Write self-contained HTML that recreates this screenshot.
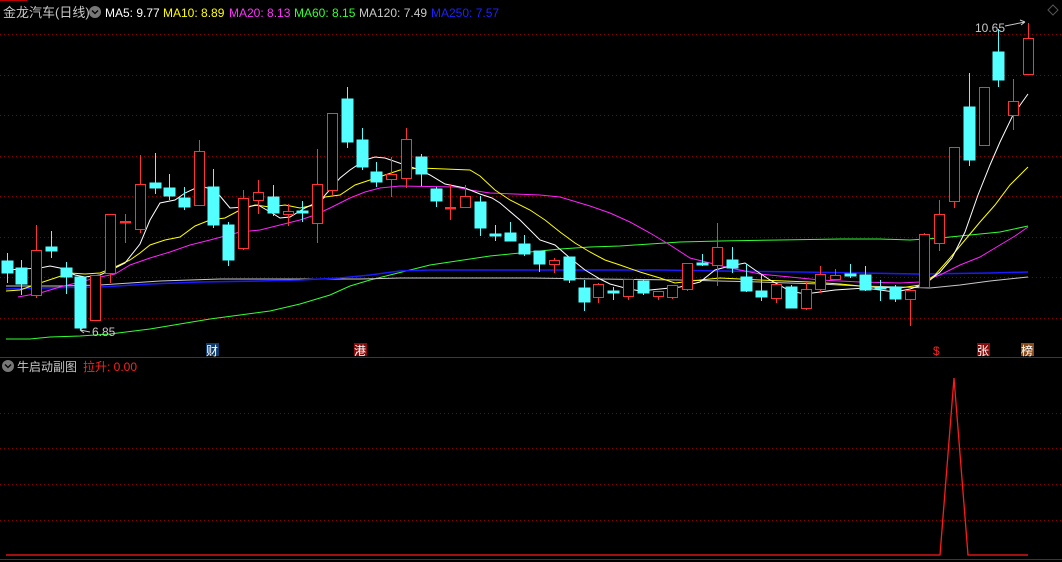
<!DOCTYPE html>
<html><head><meta charset="utf-8"><style>
html,body{margin:0;padding:0;background:#000;width:1062px;height:562px;overflow:hidden}
svg{display:block}
text{font-family:"Liberation Sans","Noto Sans CJK SC",sans-serif}
</style></head><body>
<svg width="1062" height="562" viewBox="0 0 1062 562" xmlns="http://www.w3.org/2000/svg">
<rect width="1062" height="562" fill="#000"/>
<line x1="0" y1="0.5" x2="27" y2="0.5" stroke="#c00000"/>
<g stroke="#8a0000" stroke-dasharray="1 3" stroke-width="1">
<line x1="0" y1="34.5" x2="1062" y2="34.5"/><line x1="0" y1="75.5" x2="1062" y2="75.5"/>
<line x1="0" y1="115.5" x2="1062" y2="115.5"/><line x1="0" y1="156.5" x2="1062" y2="156.5"/>
<line x1="0" y1="196.5" x2="1062" y2="196.5"/><line x1="0" y1="237.5" x2="1062" y2="237.5"/>
<line x1="0" y1="277.5" x2="1062" y2="277.5"/><line x1="0" y1="318.5" x2="1062" y2="318.5"/>
<line x1="0" y1="413.5" x2="1062" y2="413.5"/><line x1="0" y1="448.5" x2="1062" y2="448.5"/>
<line x1="0" y1="484.5" x2="1062" y2="484.5"/><line x1="0" y1="520.5" x2="1062" y2="520.5"/>
</g>
<line x1="0" y1="357.5" x2="1062" y2="357.5" stroke="#c00000"/>
<line x1="0" y1="559.5" x2="1062" y2="559.5" stroke="#c00000"/>

<!-- header -->
<text x="3" y="17" font-size="13" fill="#c8c8c8">金龙汽车(日线)</text>
<circle cx="95" cy="12" r="6" fill="#777"/><path d="M92 10.5 L95 13.5 L98 10.5" stroke="#000" stroke-width="1.3" fill="none"/>
<text x="105" y="17" font-size="12" fill="#fff">MA5: 9.77</text>
<text x="163" y="17" font-size="12" fill="#ffff00">MA10: 8.89</text>
<text x="229" y="17" font-size="12" fill="#ff33ff">MA20: 8.13</text>
<text x="294" y="17" font-size="12" fill="#33ff33">MA60: 8.15</text>
<text x="359" y="17" font-size="12" fill="#c8c8c8">MA120: 7.49</text>
<text x="431" y="17" font-size="12" fill="#2020ff">MA250: 7.57</text>
<path d="M1048 10 L1053 5 L1058 10 L1053 15 Z" stroke="#555" fill="none"/>

<!-- MAs -->
<g fill="none" stroke-width="1">
<polyline stroke="#33ff33" points="6,339 30,339 50,337 80,336 110,334 150,329 180,324 210,319 240,315 270,311 300,304 330,295 350,286 370,280 390,275 410,270 430,265 450,262 470,259 490,256 510,254 530,252 560,249 590,247 620,246 650,244 680,242 720,241 780,240 840,239 880,239 910,240 940,238 970,235 1000,232 1028,226"/>
<polyline stroke="#c8c8c8" points="6,286 60,286 100,285 130,283 160,281 220,279 360,279 400,278 530,278 600,279 680,280 720,281 760,282 820,284 860,286 900,287 930,288 960,285 990,281 1028,277"/>
<polyline stroke="#1a1aff" stroke-width="1.5" points="6,289 40,288 100,287 150,284 200,282 260,281 300,280 340,278 370,275 400,271 430,270 660,270 720,271 800,272 860,273 920,274 990,273 1028,272"/>
<polyline stroke="#ff22ff" points="18,297 40,293 60,287 80,282 100,277 115,274 130,265 150,258 170,252 190,245 210,240 225,236 240,232 260,230 280,225 300,220 315,215 330,208 350,198 365,192 380,188 400,186 455,187 470,190 490,193 540,195 560,197 590,206 610,213 630,222 650,233 670,245 690,258 710,263 730,268 760,274 790,277 820,280 860,282 900,283 920,282 940,275 960,265 980,257 1000,245 1015,236 1028,227"/>
<polyline stroke="#ffff00" points="6,291 20,290 40,283 55,278 70,273 85,274 100,273 115,267 130,260 140,253 150,245 165,240 180,237 195,226 210,220 225,218 240,210 255,205 270,207 285,205 300,208 315,205 325,197 340,195 355,185 370,180 385,175 400,170 420,168 470,170 480,176 495,190 510,200 530,210 545,220 560,232 575,243 590,252 605,260 620,265 640,272 660,278 675,283 700,280 720,278 760,280 810,282 840,284 870,287 900,288 920,285 935,275 950,258 965,240 980,222 995,205 1010,185 1028,167"/>
<polyline stroke="#ffffff" points="6,270 40,268 50,266 60,268 75,275 85,277 100,275 115,268 125,263 140,244 150,220 160,203 175,200 185,193 200,186 215,190 230,208 245,207 258,205 272,213 280,218 290,217 305,208 320,201 340,178 350,170 365,160 375,157 385,158 405,165 420,170 430,175 445,184 465,188 480,194 492,198 500,203 520,220 540,240 555,245 570,258 585,270 600,279 610,284 625,288 640,291 680,287 700,282 715,270 730,266 745,263 755,270 770,280 790,291 805,294 835,290 865,288 895,292 910,289 925,284 940,272 952,258 965,232 978,195 990,165 1000,142 1013,115 1028,94"/>
</g>

<!-- candles -->
<g id="c" stroke-width="1">
<g stroke="#54ffff" fill="#54ffff">
<line x1="7.5" y1="253" x2="7.5" y2="283"/><rect x="2" y="261" width="11" height="12"/>
<line x1="21.5" y1="260" x2="21.5" y2="295"/><rect x="16" y="268" width="11" height="16"/>
<line x1="51.5" y1="231" x2="51.5" y2="258"/><rect x="46" y="247" width="11" height="4"/>
<line x1="66.5" y1="262" x2="66.5" y2="294"/><rect x="61" y="268" width="11" height="9"/>
<line x1="80.5" y1="277" x2="80.5" y2="330"/><rect x="75" y="277" width="11" height="51"/>
<line x1="155.5" y1="153" x2="155.5" y2="194"/><rect x="150" y="183" width="11" height="5"/>
<line x1="169.5" y1="174" x2="169.5" y2="200"/><rect x="164" y="188" width="11" height="8"/>
<line x1="184.5" y1="187" x2="184.5" y2="210"/><rect x="179" y="198" width="11" height="9"/>
<line x1="213.5" y1="169" x2="213.5" y2="228"/><rect x="208" y="187" width="11" height="38"/>
<line x1="228.5" y1="222" x2="228.5" y2="266"/><rect x="223" y="225" width="11" height="35"/>
<line x1="273.5" y1="185" x2="273.5" y2="216"/><rect x="268" y="197" width="11" height="16"/>
<line x1="302.5" y1="201" x2="302.5" y2="222"/><rect x="297" y="211" width="11" height="2"/>
<line x1="347.5" y1="87" x2="347.5" y2="148"/><rect x="342" y="99" width="11" height="43"/>
<line x1="362.5" y1="128" x2="362.5" y2="170"/><rect x="357" y="140" width="11" height="27"/>
<line x1="376.5" y1="162" x2="376.5" y2="187"/><rect x="371" y="172" width="11" height="10"/>
<line x1="421.5" y1="154" x2="421.5" y2="186"/><rect x="416" y="157" width="11" height="17"/>
<line x1="436.5" y1="187" x2="436.5" y2="207"/><rect x="431" y="189" width="11" height="12"/>
<line x1="480.5" y1="196" x2="480.5" y2="236"/><rect x="475" y="202" width="11" height="26"/>
<line x1="495.5" y1="225" x2="495.5" y2="241"/><rect x="490" y="234" width="11" height="2"/>
<line x1="510.5" y1="222" x2="510.5" y2="241"/><rect x="505" y="233" width="11" height="8"/>
<line x1="524.5" y1="235" x2="524.5" y2="256"/><rect x="519" y="244" width="11" height="10"/>
<line x1="539.5" y1="251" x2="539.5" y2="272"/><rect x="534" y="251" width="11" height="13"/>
<line x1="569.5" y1="257" x2="569.5" y2="283"/><rect x="564" y="257" width="11" height="23"/>
<line x1="584.5" y1="280" x2="584.5" y2="311"/><rect x="579" y="288" width="11" height="14"/>
<line x1="613.5" y1="287" x2="613.5" y2="300"/><rect x="608" y="291" width="11" height="2"/>
<line x1="643.5" y1="279" x2="643.5" y2="295"/><rect x="638" y="281" width="11" height="12"/>
<line x1="702.5" y1="254" x2="702.5" y2="266"/><rect x="697" y="263" width="11" height="2"/>
<line x1="732.5" y1="247" x2="732.5" y2="273"/><rect x="727" y="260" width="11" height="8"/>
<line x1="746.5" y1="264" x2="746.5" y2="292"/><rect x="741" y="277" width="11" height="14"/>
<line x1="761.5" y1="275" x2="761.5" y2="301"/><rect x="756" y="291" width="11" height="6"/>
<line x1="791.5" y1="285" x2="791.5" y2="308"/><rect x="786" y="287" width="11" height="21"/>
<line x1="850.5" y1="264" x2="850.5" y2="278"/><rect x="845" y="274" width="11" height="2"/>
<line x1="865.5" y1="266" x2="865.5" y2="291"/><rect x="860" y="275" width="11" height="15"/>
<line x1="880.5" y1="280" x2="880.5" y2="301"/><rect x="875" y="288" width="11" height="1"/>
<line x1="895.5" y1="285" x2="895.5" y2="302"/><rect x="890" y="287" width="11" height="12"/>
<line x1="969.5" y1="73" x2="969.5" y2="166"/><rect x="964" y="107" width="11" height="53"/>
<line x1="998.5" y1="29" x2="998.5" y2="87"/><rect x="993" y="52" width="11" height="28"/>
</g>
<g stroke="#ff3333" fill="#000">
<line x1="36.5" y1="225" x2="36.5" y2="298"/><rect x="31.5" y="250.5" width="10" height="45"/>
<line x1="95.5" y1="275" x2="95.5" y2="320"/><rect x="90.5" y="275.5" width="10" height="45"/>
<line x1="110.5" y1="214" x2="110.5" y2="283"/><rect x="105.5" y="214.5" width="10" height="59"/>
<line x1="125.5" y1="214" x2="125.5" y2="243"/><rect x="120.5" y="221.5" width="10" height="1.5" fill="#ff3333"/>
<line x1="140.5" y1="155" x2="140.5" y2="233"/><rect x="135.5" y="184.5" width="10" height="45"/>
<line x1="199.5" y1="140" x2="199.5" y2="205"/><rect x="194.5" y="151.5" width="10" height="54"/>
<line x1="243.5" y1="190" x2="243.5" y2="250"/><rect x="238.5" y="198.5" width="10" height="50"/>
<line x1="258.5" y1="180" x2="258.5" y2="214"/><rect x="253.5" y="192.5" width="10" height="8"/>
<line x1="288.5" y1="204" x2="288.5" y2="226"/><rect x="283.5" y="211.5" width="10" height="3"/>
<line x1="317.5" y1="149" x2="317.5" y2="243"/><rect x="312.5" y="184.5" width="10" height="39"/>
<line x1="332.5" y1="113" x2="332.5" y2="195"/><rect x="327.5" y="113.5" width="10" height="77"/>
<line x1="391.5" y1="157" x2="391.5" y2="197"/><rect x="386.5" y="174.5" width="10" height="5"/>
<line x1="406.5" y1="128" x2="406.5" y2="188"/><rect x="401.5" y="139.5" width="10" height="39"/>
<line x1="450.5" y1="184" x2="450.5" y2="220"/><rect x="445.5" y="207.5" width="10" height="1.5" fill="#ff3333"/>
<line x1="465.5" y1="185" x2="465.5" y2="208"/><rect x="460.5" y="196.5" width="10" height="11"/>
<line x1="554.5" y1="258" x2="554.5" y2="273"/><rect x="549.5" y="260.5" width="10" height="4"/>
<line x1="598.5" y1="283" x2="598.5" y2="303"/><rect x="593.5" y="284.5" width="10" height="13"/>
<line x1="628.5" y1="279" x2="628.5" y2="300"/><rect x="623.5" y="279.5" width="10" height="17"/>
<line x1="658.5" y1="291" x2="658.5" y2="300"/><rect x="653.5" y="291.5" width="10" height="5"/>
<line x1="672.5" y1="285" x2="672.5" y2="299"/><rect x="667.5" y="285.5" width="10" height="12"/>
<line x1="687.5" y1="263" x2="687.5" y2="291"/><rect x="682.5" y="263.5" width="10" height="26"/>
<line x1="717.5" y1="223" x2="717.5" y2="286"/><rect x="712.5" y="247.5" width="10" height="18"/>
<line x1="776.5" y1="284" x2="776.5" y2="303"/><rect x="771.5" y="284.5" width="10" height="14"/>
<line x1="806.5" y1="282" x2="806.5" y2="310"/><rect x="801.5" y="289.5" width="10" height="19"/>
<line x1="820.5" y1="266" x2="820.5" y2="293"/><rect x="815.5" y="274.5" width="10" height="15"/>
<line x1="835.5" y1="269" x2="835.5" y2="280"/><rect x="830.5" y="275.5" width="10" height="4"/>
<line x1="910.5" y1="290" x2="910.5" y2="326"/><rect x="905.5" y="290.5" width="10" height="9"/>
<line x1="924.5" y1="233" x2="924.5" y2="287"/><rect x="919.5" y="234.5" width="10" height="53"/>
<line x1="939.5" y1="200" x2="939.5" y2="251"/><rect x="934.5" y="214.5" width="10" height="29"/>
<line x1="954.5" y1="147" x2="954.5" y2="208"/><rect x="949.5" y="147.5" width="10" height="54"/>
<line x1="984.5" y1="87" x2="984.5" y2="145"/><rect x="979.5" y="87.5" width="10" height="58"/>
<line x1="1013.5" y1="79" x2="1013.5" y2="130"/><rect x="1008.5" y="101.5" width="10" height="14"/>
<line x1="1028.5" y1="23" x2="1028.5" y2="74"/><rect x="1023.5" y="38.5" width="10" height="36"/>
</g>
</g>

<!-- labels -->
<text x="92" y="336" font-size="12" fill="#c8c8c8">6.85</text>
<path d="M80 330 L90 332 M80 330 L84 327 M80 330 L84 333" stroke="#c8c8c8" fill="none"/>
<text x="975" y="32" font-size="12" fill="#c8c8c8">10.65</text>
<path d="M1005 26 L1025 22 M1025 22 L1020 20 M1025 22 L1021 25" stroke="#c8c8c8" fill="none"/>

<rect x="206" y="343" width="13" height="13" fill="#0f3c6e"/>
<text x="206" y="355" font-size="12" fill="#fff">财</text>
<rect x="354" y="343" width="13" height="13" fill="#8a0a0a"/>
<text x="354" y="355" font-size="12" fill="#fff">港</text>
<text x="933" y="355" font-size="12" fill="#ff2020">$</text>
<rect x="977" y="343" width="13" height="13" fill="#8a0a0a"/>
<text x="977" y="355" font-size="12" fill="#fff">张</text>
<rect x="1021" y="343" width="13" height="13" fill="#8b4a1a"/>
<text x="1021" y="355" font-size="12" fill="#fff">榜</text>

<!-- sub panel -->
<circle cx="8" cy="366" r="6" fill="#777"/><path d="M5 364.5 L8 367.5 L11 364.5" stroke="#000" stroke-width="1.3" fill="none"/>
<text x="17" y="371" font-size="12" fill="#c8c8c8">牛启动副图</text>
<text x="83" y="371" font-size="12" fill="#ff2020">拉升: 0.00</text>
<polyline fill="none" stroke="#ff1a1a" stroke-width="1.3" points="6,555 940,555 954,378 968,555 1028,555"/>
</svg>
</body></html>
